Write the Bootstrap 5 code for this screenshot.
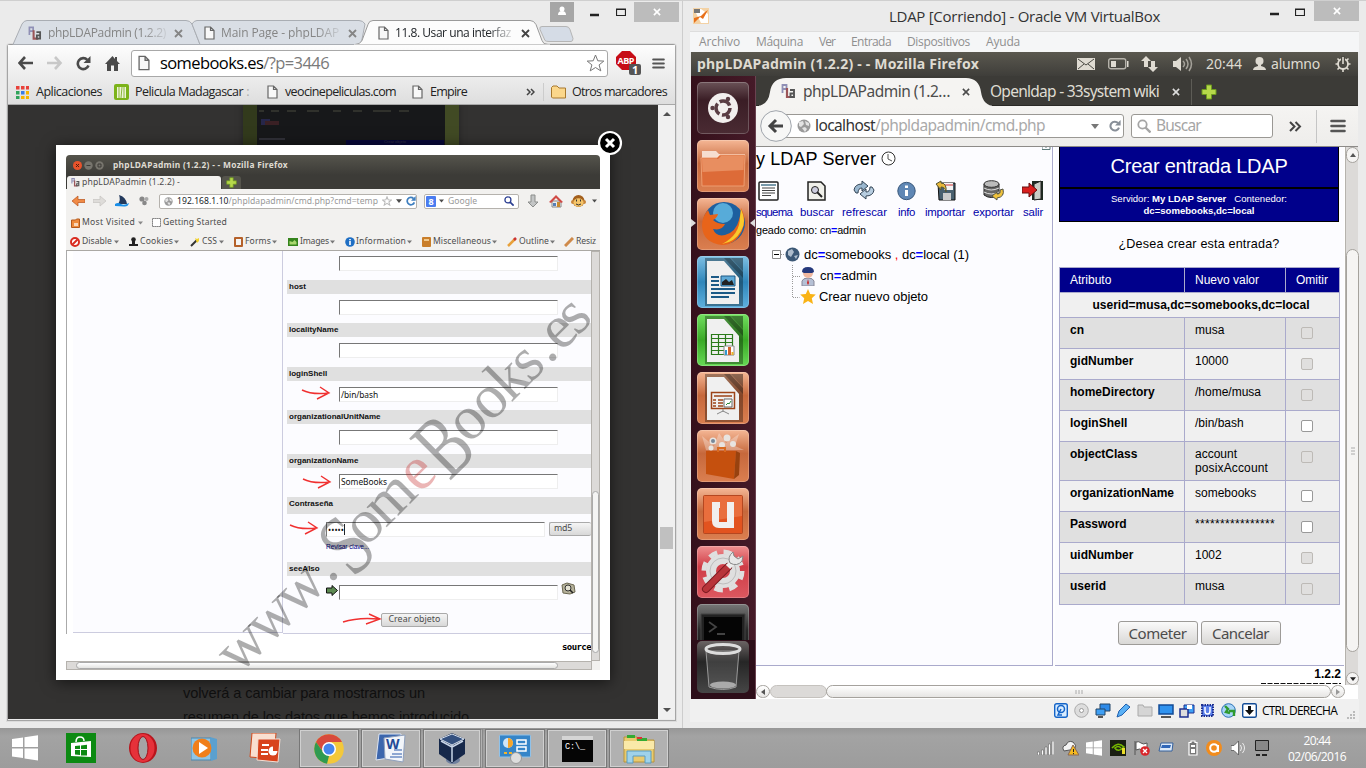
<!DOCTYPE html>
<html lang="es">
<head>
<meta charset="utf-8">
<title>Escritorio</title>
<link rel="stylesheet" href="https://cdn.jsdelivr.net/npm/bootstrap@5.3.0/dist/css/bootstrap.min.css">
<style>
body{width:1366px;height:768px;overflow:hidden;background:#ebebeb;font-family:"Open Sans","Noto Sans",sans-serif;font-size:12px;line-height:1;color:#222}
svg{display:block;flex:none}
span,b{white-space:nowrap}
.gr{display:grid;align-items:center;justify-items:start}
.desk{height:728px}
.win{width:683px;height:728px;border-top:1px solid #cfcfcf;background:#ebebeb}
.ar{font-family:"Liberation Sans",Arial,sans-serif}
.ub{font-family:"Noto Sans","Open Sans",sans-serif}
/* browser window, left */
.w1{border-right:1px solid #cdcdcd}
.strip{height:43px}
.strip>svg{left:0;top:0}
.tabs{height:26px;margin-top:19px;padding-left:28px;grid-template-columns:20px 126px 30px 17px 127px 30px 17px 126px 9px;color:#858585}
.fade1{-webkit-mask:linear-gradient(90deg,#000 80%,#0003);mask:linear-gradient(90deg,#000 80%,#0003)}
.ctl{left:550px;top:0;height:21px;grid-template-columns:40px 26px 18px 45px}
.frame{width:669px;height:677px;margin-left:7px;border:1px solid #a5a5a5;border-top-color:#9a9a9a;border-radius:3px 3px 0 0;box-shadow:0 0 0 1px #dcdcdc}
.tools{height:60px;background:linear-gradient(#fdfdfd,#dedede);border-bottom:1px solid #a8a8a8}
.navr{height:36px;padding-left:10px;grid-template-columns:29px 29px 29px 26px 485px 36px 13px}
.omni{width:477px;height:27px;background:#fff;border:1px solid #a8a8a8;border-radius:3px;grid-template-columns:22px 426px 20px;padding-left:6px;font-size:16.5px}
.bmk{height:22px;padding-left:8px;grid-template-columns:20px 78px 21px 132px 18px 127px 18px 96px 17px 8px 21px 96px;font-size:12.5px}
.page{height:614px}
.dark{width:650px;background:#333231}
.shot{width:216px;height:60px;margin-left:235px;background:#17181a;border-left:14px solid #323a1c;border-right:14px solid #414a24;box-shadow:0 0 6px #222}
.shot .blue{width:98px;height:9px;background:#08083a;margin:31px 0 0 89px;color:#334;font-size:4px}
.para{margin:520px 0 0 175px;font-size:14.6px;line-height:24px;color:#101010}
.box{left:48px;top:40px;width:554px;height:535px;padding:10px;background:#fff;box-shadow:0 2px 14px #0009}
.cls{left:541px;top:-15px}
.sb{width:17px;background:#f0f0f0}
.sb i{display:block;width:13px;height:22px;background:#c0c0c0;margin-top:400px}
/* picture inside the lightbox */
.pic{width:534px;height:515px;background:#f2f1ef;border-radius:4px 4px 0 0;color:#4c4c4c;font-size:8.6px;overflow:hidden}
.pt{height:20px;background:linear-gradient(#55544c,#3c3b37);grid-template-columns:11px 11px 18px 180px;padding-left:7px;color:#dfdbd2;font-size:8.4px}
.ptab{height:14px;background:#3c3b37}
.ptab .on{width:154px;height:13px;margin-left:1px;background:#f2f1ef;border-radius:3px 3px 0 0;grid-template-columns:11px 110px;padding-left:4px}
.ptab .pl{width:19px;height:13px;margin-left:1px;background:#55544c;border-radius:3px 3px 0 0}
.pnav{height:24px;grid-template-columns:22px 22px 24px 20px 265px 103px 22px 22px 16px;padding-left:5px}
.pf{height:15px;border:1px solid #b5b2ad;border-radius:2px;background:#fff;padding-left:4px}
.pbm{height:19px;padding-left:5px;grid-template-columns:11px 56px 14px 11px 80px}
.pdev{height:19px;padding:1px 0 0 4px;border-bottom:1px solid #aaa8a4;grid-template-columns:12px 32px 15px 11px 34px 16px 12px 17px 15px 11px 27px 16px 12px 30px 15px 11px 51px 15px 11px 59px 15px 12px 31px 14px 12px 30px}
.pc{height:410px;background:#fff}
.pl1{width:217px;margin-left:0;border-left:1px solid #aaa;height:383px}
.pl1 i{display:block;height:382px;margin-left:6px;background:#fcfcff;border-right:1px solid #ccccdf;border-bottom:1px solid #ccccdf}
.pr{width:308px;background:#fcfcff;height:383px;border-bottom:1px solid #ccccdf;padding-left:4px}
.hd{height:14px;background:#e0e0e0;padding-left:2px;font:bold 8px/14px "Liberation Sans",Arial,sans-serif;color:#111}
.inp{height:15px;width:219px;border:1px solid #eee;border-top:1px solid #777;border-left:1px solid #777;background:#fff;font-size:8.4px;line-height:13px;color:#111;padding-left:1px}
.fr{height:29.5px;padding:6px 0 0 52px}
.pbtn{border:1px solid #aaa;border-radius:2px;background:linear-gradient(#f5f5f5,#d8d8d8);height:14px;font-size:8.8px;line-height:11px}
.psb{width:9px;border:1px solid #b5b2ad;background:#dcdad8}
.psb i{display:block;margin:239px 0 0 0;height:162px;width:7px;border:1px solid #aaa;border-radius:4px;background:#f4f4f3}
.phs{height:9px;border:1px solid #b5b2ad;background:#dcdad8;width:526px}
.phs i{display:block;margin-left:9px;width:482px;height:7px;border:1px solid #aaa;border-radius:4px;background:linear-gradient(#fff,#e4e4e2)}
.ov{left:0;top:0}
/* virtual machine window, right */
.tb{height:30px;font-size:15px;padding-left:10px;grid-template-columns:196px 381px 25px 19px 45px;color:#333}
.xb{width:45px;height:20px;background:#bcbcbc}
.menu{height:21px;margin:0 7px;background:#f5f6f7;border-top:1px solid #ddd;grid-template-columns:57px 63px 32px 56px 79px 60px;padding-left:9px;color:#8f8f8f;font-size:12px}
.vm{width:667px;height:647px;margin-left:8px;background:#3c3b37}
.pan{height:24px;background:linear-gradient(#5a584f,#3f3e3a);color:#dfdbd2;padding-left:6px;grid-template-columns:380px 31px 33px 32px 33px 47px 18px 64px 16px;font-size:14px}
.lau{width:65px;height:623px;background:linear-gradient(90deg,#35101b,#451a28);border-right:1px solid #6a4250;padding:6px 0 0 6px}
.tile{width:52px;height:52px;border-radius:5px;margin-bottom:6px;box-shadow:inset 0 0 0 1px #ffffff38}
.t-or{background:linear-gradient(#f5b795,#c6683c 45%,#db7f50)}
.t-bl{background:linear-gradient(#7fc0e4,#2f86ba 50%,#5fb0de)}
.t-gr{background:linear-gradient(#73e060,#3aa926 50%,#67da55)}
.t-rd{background:linear-gradient(#f09090,#cf3c46 40%,#dc5860)}
.t-dk{background:linear-gradient(#6a5257,#3a1d25 35%,#4a2b33)}
.t-gy{background:linear-gradient(#777,#2a2a2a 50%,#1a1a1a)}
.t-tr{background:linear-gradient(#5d5555,#2a2a2a 45%,#444)}
.ff{width:602px}
.ftab{height:30px;background:#3c3b37;font-size:15.5px}
.ftab .gr{height:31px;padding-left:25px;grid-template-columns:22px 158px 29px 181px 30px 16px;color:#4c4c4c}
.fnav{height:41px;background:linear-gradient(#f5f4f2,#eeedeb);border-bottom:1px solid #8d8b88;grid-template-columns:371px 155px 32px 14px 20px;padding-left:4px;font-size:15.5px}
.ub1{width:350px;height:24px;border:1px solid #9a9894;border-radius:0 3px 3px 0;background:#fff;margin-left:14px;grid-template-columns:18px 276px 18px 16px;padding-left:22px;color:#aaa}
.bk{left:0;top:-4px}
.sbx{width:142px;height:24px;border:1px solid #9a9894;border-radius:3px;background:#fff;grid-template-columns:19px 60px;padding-left:5px;color:#a5a5a5}
.cont{height:538px;background:#fff}
.pla{width:297px;height:519px;background:#fcfcff;border-right:1px solid #aaaacc;border-bottom:1px solid #aaaacc;color:#000}
.srv{height:23px;grid-template-columns:125px 20px;font-size:18px}
.ics{height:36px;margin-top:8px;padding-left:2px;grid-template-columns:49px 46px 44px 38px 47px 40px 22px;align-items:start}
.lbs{height:16px;grid-template-columns:44px 42px 56px 27px 48px 50px 30px;color:#0000aa;font-size:11.4px}
.tr1{height:21px;padding-left:16px;grid-template-columns:13px 19px 200px;font-size:13px}
.tr2{height:21px;padding-left:36px;grid-template-columns:8px 20px 200px;font-size:13px}
.eq{color:#00f;font-weight:bold}
.rt{width:289px;height:519px;margin-left:2px;background:#fcfcff;border-bottom:1px solid #aaaacc;padding:0 5px 0 4px;color:#000}
.h1b{height:41px;line-height:38px;background:#00008b;color:#fff;border:1px solid #000;border-top:0;font-size:20px;text-align:center}
.h2b{height:34px;background:#00008b;color:#fff;border:1px solid #000;border-top:1px solid #000;font-size:9.6px;line-height:12px;padding-top:4px;text-align:center}
.tbl{width:280px;border-collapse:collapse;table-layout:fixed;font-size:12px;line-height:14px}
.tbl td,.tbl th{border:1px solid #aaaacc;padding:5px 10px 0;height:31px;vertical-align:top;overflow:visible}
.tbl th{background:#00008b;color:#fff;font-weight:normal;height:25px}
.tbl .o td{background:#e0e0e0}.tbl .e td{background:#f0f0f0}
.tbl .id td{height:25px;text-align:center;padding-left:11px;padding-right:8px}
.tbl .tall td{height:39px}
.ck{display:block;width:12px;height:12px;margin:4px 0 0 5px;border:1px solid #bdbab6;border-radius:2px;background:#e0dfde}
.ck.w{background:#fff;border-color:#999}
.fb{height:24px;border:1px solid #9d9b98;border-radius:3px;background:linear-gradient(#fafafa,#d9d8d6);color:#4c4c4c;font-size:15px;width:80px}
.vs{width:13px;background:#dcdad8;border-left:1px solid #b5b2ad;height:538px}
.vs i{display:block;width:13px;background:#f5f4f3;border:1px solid #a5a29d;border-radius:7px}
.hs{height:14px;background:#fff}
.hs i{display:block;height:13px;border:1px solid #a5a29d;border-radius:7px;background:linear-gradient(#fff,#e6e5e3)}
.stt{height:23px;margin:0 7px;background:#f0f0f0;padding-left:364px;grid-template-columns:20px 21px 21px 21px 21px 21px 21px 21px 21px 20px 85px 10px;font-size:12px;color:#000}
/* taskbar */
.tk{height:40px;background:linear-gradient(#979797,#a3a3a3 20%,#9c9c9c);grid-template-columns:54px 63px 62px 58px 50px 62px 62px 62px 62px 62px 428px 25px 24px 24px 24px 24px 30px 18px 25px 24px 33px 60px;padding-left:12px}
.ap{width:60px;height:39px;margin-top:1px;border:1px solid #777;box-shadow:inset 0 0 0 1px #d0d0d0;background:#b1b1b1}
.clk{color:#fff;font-size:12px;line-height:16px;text-align:center;padding-top:2px}
</style>
</head>
<body>
<svg width="0" height="0" class="position-absolute"><defs>
<symbol id="doc" viewBox="0 0 11 14"><path d="M1 1h5.500l3.500 3.500V13H1zM6.500 1v3.500H10" fill="#f8f8f8" stroke="#666" stroke-width="1.200"/></symbol>
<symbol id="x" viewBox="0 0 9 9"><path d="M1 1l7 7M8 1l-7 7" stroke="currentColor" stroke-width="1.800" fill="none"/></symbol>
<symbol id="dn" viewBox="0 0 8 5"><path d="M0 0h8l-4 5z" fill="currentColor"/></symbol>
<symbol id="pla" viewBox="0 0 15 15"><path d="M1.500 9V1h4v4h-4" fill="none" stroke="#8f8fb5" stroke-width="1.800"/><path d="M6 4v9h5" fill="none" stroke="#9c5558" stroke-width="2.200"/><path d="M9 6h4v7h-3.500V9.500H13" fill="none" stroke="#555" stroke-width="1.900"/></symbol>
<symbol id="plus" viewBox="0 0 16 16"><path d="M5.500 1h5v4.500H15v5h-4.500V15h-5v-4.500H1v-5h4.500z" fill="#b6d84a" stroke="#6d9a1e"/></symbol>
<symbol id="globe" viewBox="0 0 14 14"><circle cx="7" cy="7" r="6.500" fill="#9a9a9a"/><path d="M2 3l4-1 1 3-3 3-2-1zM8 2l4 2v3l-3-1zM5 9l3-1 2 2-2 3z" fill="#e3e3e3"/></symbol>
<symbol id="rel" viewBox="0 0 15 15"><path d="M12.500 9.500A5.500 5.500 0 1 1 11.300 3.800" fill="none" stroke="currentColor" stroke-width="2.600"/><path d="M14.500 0v7h-7z" fill="currentColor"/></symbol>
<symbol id="ham" viewBox="0 0 16 13"><path d="M1.500 1.500h13M1.500 6.500h13M1.500 11.500h13" stroke="#555" stroke-width="2.600" stroke-linecap="round"/></symbol>
<symbol id="win" viewBox="0 0 26 26"><path d="M0 4l11-1.500V12H0zM12.500 2.300L26 .3V12H12.500zM0 13.500h11V23L0 21.500zM12.500 13.500H26v12l-13.500-2z" fill="#fff"/></symbol>
<symbol id="mag" viewBox="0 0 14 14"><circle cx="5.500" cy="5.500" r="4.200" fill="none" stroke="currentColor" stroke-width="1.800"/><path d="M8.500 8.500l5 5" stroke="currentColor" stroke-width="2.400"/></symbol>
<symbol id="lo" viewBox="0 0 52 52"><path d="M8 2h25l13 14v34H8z" fill="#0005"/><path d="M10 5h17l15 17v26H10z" fill="#f0f0f0"/><path d="M27 2h19v20z" fill="#0004"/><path d="M34 2h12v13z" fill="#0003"/></symbol>
</defs></svg>

<div class="desk d-flex">
<!-- Chrome -->
<div class="win w1 position-relative">
 <div class="strip position-relative">
  <svg class="position-absolute" width="682" height="44">
   <path d="M13 43.500L22 23q2-3.500 5-3.500H186q4 0 6 3.500l8 20.500z" fill="#d9dee5" stroke="#a9adb3"/>
   <path d="M200 43.500L192 23q2-3.500 5-3.500H359q4 0 6 3.500l-4 20.500z" fill="#d9dee5" stroke="#a9adb3"/>
   <path d="M545 39.500l-5-11q-1-3 2-3h24q3 0 4 3l3 9q0 3-2 3h-22q-3 0-4-1z" fill="#d5dce6" stroke="#b5b5b5"/>
   <path d="M355 43.500q5 0 7-4l6-16q1-4 5-4H530q4 0 6 4l6 16q1 4 6 4z" fill="#fcfcfc" stroke="#9a9a9a"/>
   <path d="M354 44H550" stroke="#fcfcfc"/>
  </svg>
  <div class="tabs gr position-absolute top-0">
   <svg width="14" height="15"><use href="#pla"/></svg><span class="fade1" data-w="118">phpLDAPadmin (1.2.2)</span><svg width="9" height="9"><use href="#x"/></svg>
   <svg width="11" height="14"><use href="#doc"/></svg><span class="fade1" data-w="118">Main Page - phpLDAP</span><svg width="9" height="9"><use href="#x"/></svg>
   <svg width="11" height="14"><use href="#doc"/></svg><span data-w="116" class="text-dark fade1">11.8. Usar una interfaz</span><svg width="9" height="9" color="#444"><use href="#x"/></svg>
  </div>
  <div class="ctl gr position-absolute">
   <svg width="24" height="20"><path d="M0 0h24v20H0z" fill="#a6a6a6"/><circle cx="12" cy="7" r="2.500" fill="#fff"/><path d="M8 13q0-4 4-4t4 4z" fill="#fff"/></svg>
   <svg width="9" height="10"><path d="M0 8h9" stroke="#222" stroke-width="2.500"/></svg>
   <svg width="10" height="8"><path d="M.5 1h9v6.500h-9zM0 1.500h10" fill="none" stroke="#222" stroke-width="1.200"/></svg>
   <div class="xb d-flex align-items-center justify-content-center"><svg width="8" height="8" color="#fff"><use href="#x"/></svg></div>
  </div>
 </div>
 <div class="frame">
  <div class="tools">
   <div class="navr gr">
    <svg width="16" height="14"><path d="M1 7h14M7 1L1.500 7 7 13" fill="none" stroke="#4a4a4a" stroke-width="2.600"/></svg>
    <svg width="16" height="14"><path d="M0 7h14M8 1l5.500 6L8 13" fill="none" stroke="#c8c8c8" stroke-width="2.600"/></svg>
    <svg width="15" height="15" color="#4a4a4a"><use href="#rel"/></svg>
    <svg width="15" height="15"><path d="M7.500 0L0 8h2v7h4V9.500h3V15h4V8h2l-3-3V1h-2v2z" fill="#4a4a4a"/></svg>
    <div class="omni gr"><svg width="12" height="16"><use href="#doc"/></svg><span data-w="169"><span class="text-black">somebooks.es</span><span style="color:#7a7a7a">/?p=3446</span></span>
     <svg width="19" height="18" viewBox="0 0 19 18"><path d="M9.500 1l2.300 5.800 6 .3-4.700 3.800 1.700 6-5.300-3.400-5.300 3.400 1.700-6L1.200 7.100l6-.3z" fill="#fff" stroke="#777"/></svg></div>
    <svg width="26" height="25"><path d="M6 0h8l6 6v7l-6 6H6l-6-6V6z" fill="#c70d16"/><text x="10" y="13" font-size="9" font-weight="bold" fill="#fff" text-anchor="middle" textLength="17">ABP</text><rect x="13" y="13" width="12" height="11" rx="2" fill="#555"/><text x="16" y="23" font-size="11" font-weight="bold" fill="#fff">1</text></svg>
    <svg width="13" height="13"><use href="#ham"/></svg>
   </div>
   <div class="bmk gr">
    <svg width="13" height="13"><path d="M0 0h3.500v3.500H0zM5 0h3.500v3.500H5zM10 0h3v3.500h-3z" fill="#e8413a"/><path d="M0 5h3.500v3.500H0z" fill="#2fa35a"/><path d="M5 5h3.500v3.500H5z" fill="#3a7de8"/><path d="M10 5h3v3.500h-3zM5 10h3.500v3H5zM10 10h3v3h-3z" fill="#f7b400"/><path d="M0 10h3.500v3H0z" fill="#2fa35a"/></svg><span data-w="66">Aplicaciones</span>
    <svg width="15" height="16"><rect width="15" height="16" rx="2" fill="#7cb31a"/><path d="M3 3h9v11H3z" fill="#eef5d8"/><path d="M5 3v11M8 3l-1 11M10 3v11" stroke="#8ab53a"/></svg><span><span data-w="108">Pelicula Madagascar</span> <span style="color:#aaa">:</span></span>
    <svg width="11" height="14"><use href="#doc"/></svg><span data-w="111">veocinepeliculas.com</span>
    <svg width="11" height="14"><use href="#doc"/></svg><span data-w="37">Empire</span>
    <svg width="9" height="8"><path d="M1 1l3 3-3 3M5 1l3 3-3 3" fill="none" stroke="#444" stroke-width="1.500"/></svg>
    <svg width="1" height="18"><path d="M.5 0v18" stroke="#ccc"/></svg>
    <svg width="16" height="14"><path d="M.5 12V2.500L2 1h4l2 2h6.500v10H1.500z" fill="#fbd78b" stroke="#a8792e"/></svg><span data-w="95">Otros marcadores</span>
   </div>
  </div>
  <div class="page d-flex position-relative">
   <div class="dark position-relative overflow-hidden ar">
    <div class="position-absolute"><div class="shot"><svg class="position-absolute" width="190" height="40"><path d="M2 6h5M14 6h8M30 6h9M50 6h12M76 6h8M96 6h9M116 6h18M142 6h10" stroke="#3a3a33" stroke-width="1.500"/><path d="M4 14h9v6H4z" fill="#26264a"/><path d="M8 16h14v4H8z" fill="#3a2024"/><path d="M2 34h26" stroke="#303038" stroke-width="2"/></svg><div class="pt-1"><div class="blue text-center">Crear objeto</div></div></div></div>
    <div class="para position-relative pt-5"><div class="pt-2"><span data-w="242">volverá a cambiar para mostrarnos un</span></div><span data-w="286">resumen de los datos que hemos introducido</span></div>
   </div>
   <div class="sb d-flex flex-column align-items-center"><svg width="8" height="22"><path d="M0 11h8l-4-4z" fill="#505050"/></svg><i></i><svg class="mt-auto" width="8" height="18"><path d="M0 7h8l-4 4z" fill="#505050"/></svg></div>
   <!-- lightbox -->
   <div class="box position-absolute">
    <div class="pic position-relative ub">
     <div class="pt gr"><svg width="9" height="9"><circle cx="4.500" cy="4.500" r="4.500" fill="#e8532b"/><path d="M3 3l3 3M6 3L3 6" stroke="#52200f"/></svg><svg width="9" height="9"><circle cx="4.500" cy="4.500" r="4.200" fill="#77756d"/><path d="M2.500 4.500h4" stroke="#3c3b37"/></svg><svg width="9" height="9"><circle cx="4.500" cy="4.500" r="4.200" fill="#77756d"/><path d="M3 3h3v3H3z" fill="none" stroke="#3c3b37"/></svg><b data-w="175">phpLDAPadmin (1.2.2) - - Mozilla Firefox</b></div>
     <div class="ptab d-flex align-items-end"><div class="on gr"><svg width="9" height="9"><use href="#pla"/></svg><span data-w="98">phpLDAPadmin (1.2.2) -</span></div><div class="pl d-flex justify-content-center align-items-center"><svg width="11" height="11"><use href="#plus"/></svg></div></div>
     <div class="pnav gr">
      <svg width="14" height="12"><path d="M14 4.500H7V1L1 6l6 5V7.500h7z" fill="#f08a45" stroke="#b7531c" stroke-width=".7"/></svg>
      <svg width="14" height="12"><path d="M0 4.500h7V1l6 5-6 5V7.500H0z" fill="#dedcd9" stroke="#c5c3c0" stroke-width=".7"/></svg>
      <svg width="15" height="14"><path d="M4 1q7 2 8 9H3q3-4 1-9z" fill="#23395c"/><path d="M0 10q3-2 6 0t8-1q-1 4-5 3.500T0 12z" fill="#1a8fe8"/></svg>
      <svg width="10" height="10"><circle cx="3" cy="3" r="2.600" fill="#888"/><circle cx="7.500" cy="3" r="2" fill="#aaa"/><circle cx="5.500" cy="7" r="2.300" fill="#888"/></svg>
      <div class="pf d-flex align-items-center" style="width:258px"><svg width="9" height="9"><use href="#globe"/></svg><span class="ms-1" data-w="201"><span class="text-dark">192.168.1.10</span><span style="color:#999">/phpldapadmin/cmd.php?cmd=temp</span></span><svg class="ms-1" width="10" height="10" viewBox="0 0 19 18"><path d="M9.500 1l2.300 5.800 6 .3-4.700 3.800 1.700 6-5.300-3.400-5.300 3.400 1.700-6L1.200 7.100l6-.3z" fill="#fff" stroke="#bbb" stroke-width="2"/></svg><svg class="ms-1" width="6" height="4"><use href="#dn"/></svg><svg class="ms-1" width="10" height="10" color="#3f7fbf"><use href="#rel"/></svg></div>
      <div class="pf d-flex align-items-center" style="width:95px;padding-left:1px"><svg width="10" height="11"><rect width="10" height="11" rx="1" fill="#4a7cf0"/><text x="5" y="8.500" font-size="9" font-weight="bold" text-anchor="middle" fill="#fff">8</text></svg><svg style="margin-left:3px" width="5" height="4"><use href="#dn"/></svg><span class="ms-1" data-w="29" style="color:#999">Google</span><svg class="ms-auto me-1" width="10" height="10" color="#2c3f92"><use href="#mag"/></svg></div>
      <svg width="12" height="14"><path d="M4 1h4v7h3l-5 5-5-5h3z" fill="#c3c5c5" stroke="#8b8d8b"/></svg>
      <svg width="14" height="14"><path d="M3 7h9v6H3z" fill="#eee" stroke="#888"/><path d="M0 8l7-7 7 7-2 1-5-5-5 5z" fill="#d04a44"/><path d="M8 8h3v5H8z" fill="#c98a2f"/><path d="M4 9h3v3H4z" fill="#567fb8"/></svg>
      <svg width="15" height="14"><circle cx="7.500" cy="7" r="6" fill="#a35f1c"/><circle cx="2" cy="8" r="2" fill="#c98538"/><circle cx="13" cy="8" r="2" fill="#c98538"/><ellipse cx="7.500" cy="8.500" rx="5" ry="4.300" fill="#f5c56a"/><path d="M5.500 5.500v2M9.500 5.500v2M5 10q2.500 2 5 0" stroke="#333" fill="none"/></svg>
     </div>
     <svg class="position-absolute" style="left:526px;top:44px" width="5" height="4"><use href="#dn"/></svg>
     <div class="pbm gr"><svg width="10" height="10"><path d="M.5 2h4l1-1h3v8.500h-8z" fill="#ee8b3c" stroke="#b4591b"/><path d="M3 5h4v3H3z" fill="#f9d7b8"/></svg><span data-w="53">Most Visited</span><svg width="5" height="4" color="#888"><use href="#dn"/></svg><svg width="9" height="9"><path d="M.5.5h8v8h-8z" fill="#fff" stroke="#555" stroke-dasharray="1.200 .8"/></svg><span data-w="64">Getting Started</span></div>
     <div class="pdev gr">
      <svg width="10" height="10"><circle cx="5" cy="5" r="4" fill="#fff" stroke="#d92c20" stroke-width="2"/><path d="M2.500 7.500l5-5" stroke="#d92c20" stroke-width="2"/></svg><span data-w="30">Disable</span><svg width="5" height="4" color="#777"><use href="#dn"/></svg>
      <svg width="9" height="10"><circle cx="4.500" cy="2.500" r="2.300" fill="#222"/><path d="M3 4h3v3h3v2H0V7h3z" fill="#222"/></svg><span data-w="33">Cookies</span><svg width="5" height="4" color="#777"><use href="#dn"/></svg>
      <svg width="10" height="10"><path d="M1 9l6-6" stroke="#333" stroke-width="2"/><path d="M5 1l2 1 2-1v3l-2 2" fill="#f2d22e"/></svg><span data-w="15">CSS</span><svg width="5" height="4" color="#777"><use href="#dn"/></svg>
      <svg width="9" height="10"><rect width="9" height="10" rx="1" fill="#b5612a"/><path d="M2 2h5v6H2z" fill="#f5f5f5"/></svg><span data-w="26">Forms</span><svg width="5" height="4" color="#777"><use href="#dn"/></svg>
      <svg width="10" height="8"><path d="M0 0h10v8H0z" fill="#35841c"/><path d="M1.500 6.500V3l3 1 2-2 2 2v2.500z" fill="#a9d76e"/></svg><span data-w="29">Images</span><svg width="5" height="4" color="#777"><use href="#dn"/></svg>
      <svg width="10" height="10"><circle cx="5" cy="5" r="4.800" fill="#1f6fc4"/><path d="M5 4v4M5 2v1.200" stroke="#fff" stroke-width="1.600"/></svg><span data-w="50">Information</span><svg width="5" height="4" color="#777"><use href="#dn"/></svg>
      <svg width="9" height="10"><rect width="9" height="10" rx="1" fill="#c97e2a"/><path d="M2 2h5v2H2z" fill="#f2c98b"/></svg><span data-w="58">Miscellaneous</span><svg width="5" height="4" color="#777"><use href="#dn"/></svg>
      <svg width="10" height="10"><path d="M1 9l7-7" stroke="#e8a13a" stroke-width="2.500"/><path d="M7 3l2-2" stroke="#c33" stroke-width="2.500"/></svg><span data-w="30">Outline</span><svg width="5" height="4" color="#777"><use href="#dn"/></svg>
      <svg width="10" height="10"><path d="M1 9l8-8" stroke="#cf8a4a" stroke-width="3"/></svg><span data-w="20">Resiz</span>
     </div>
     <div class="pc d-flex overflow-hidden">
      <div class="pl1"><i></i></div>
      <div class="pr">
       <div class="fr" style="height:28.5px;padding-top:5px"><div class="inp"></div></div>
       <div class="hd">host</div><div class="fr"><div class="inp"></div></div>
       <div class="hd">localityName</div><div class="fr"><div class="inp"></div></div>
       <div class="hd">loginShell</div><div class="fr"><div class="inp"><span data-w="37">/bin/bash</span></div></div>
       <div class="hd">organizationalUnitName</div><div class="fr"><div class="inp"></div></div>
       <div class="hd">organizationName</div><div class="fr"><div class="inp"><span data-w="46">SomeBooks</span></div></div>
       <div class="hd" style="height:17px">Contraseña</div>
       <div class="fr d-flex" style="height:47.5px;padding:8px 0 0 39px"><div class="position-relative"><div class="inp"><span data-w="16">•••••</span><span class="border-start border-dark"></span></div><span class="ar" style="font-size:6.6px;color:#00008b;line-height:20px" data-w="43">Revisar clave...</span></div><div class="pbtn" style="width:60px;margin-left:4px;padding-left:4px;border-right:0"><span data-w="18">md5</span></div></div>
       <div class="hd">seeAlso</div>
       <div class="fr d-flex" style="height:37px;padding:9px 0 0 39px"><svg width="13" height="11"><path d="M.5 3H6V.5l5.500 5L6 10.500V8H.5z" fill="#5d8a52" stroke="#111"/></svg><div class="inp"></div><svg style="margin-left:3px;margin-top:-3px" width="15" height="13"><path d="M1 3l5-2 7 2 1 7-5 2-7-1z" fill="#b5b19a" stroke="#6c6852"/><circle cx="7" cy="6" r="3" fill="#e5e3d3" stroke="#333"/><path d="M9 8l3 3" stroke="#222" stroke-width="1.500"/></svg></div>
       <div class="pbtn text-center" style="width:67px;margin-left:94px"><span data-w="52">Crear objeto</span></div>
       <div class="text-end fw-bold" style="padding:13px 0 0;font:bold 9px/14px 'DejaVu Sans Mono',monospace;color:#000"><span data-w="29">source</span></div>
      </div>
      <div class="psb"><i></i></div>
     </div>
     <div class="phs"><i></i></div>
     <svg class="position-absolute ov" width="534" height="515">
      <g transform="translate(177 516) rotate(-45)" font-family="Liberation Serif" font-size="62" fill="#000" fill-opacity=".32"><text x="-6 35 76 123">www.</text><text x="143" y="13" font-size="88" textLength="38" lengthAdjust="spacingAndGlyphs">S</text><text x="174 202">om</text><text x="250" fill="#c01818">e</text><text x="280" y="12" font-size="90" textLength="42" lengthAdjust="spacingAndGlyphs">B</text><text x="320 350 379 407 433 450 473">ooks.es</text></g>
      <g fill="none" stroke="#f03030" stroke-width="1.400"><path id="arw" d="M236 235q10 5 27 3M254 232l9 6-12 6"/><use href="#arw" x="1" y="89"/><use href="#arw" x="-12" y="135"/><path d="M277 467q15-5 36-3M303 459l11 5-14 5"/></g>
     </svg>
    </div>
    <svg class="cls position-absolute" width="26" height="26"><circle cx="13" cy="13" r="11" fill="#000" stroke="#fff" stroke-width="2.200"/><path d="M9 9l8 8M17 9l-8 8" stroke="#fff" stroke-width="3"/></svg>
   </div>
  </div>
 </div>
</div>

<!-- VirtualBox -->
<div class="win">
 <div class="tb gr">
  <svg width="16" height="16"><path d="M0 0h16v16H0z" fill="#f3d2a5"/><path d="M1 1h7l7 5v9H8z" fill="#fff"/><path d="M1 15l6-6 3 2 5-9-3 2-4 4-7 2z" fill="#e8701a"/><path d="M1 1h6v4H1z" fill="#777"/></svg>
  <span data-w="271">LDAP [Corriendo] - Oracle VM VirtualBox</span>
  <svg width="9" height="12"><path d="M0 4h9" stroke="#222" stroke-width="2.500"/></svg>
  <svg width="10" height="16"><path d="M.5 1h9v6.500h-9zM0 1.500h10" fill="none" stroke="#222" stroke-width="1.200"/></svg>
  <div class="xb d-flex align-items-center justify-content-center align-self-start"><svg width="8" height="8" color="#fff"><use href="#x"/></svg></div>
 </div>
 <div class="menu gr"><span data-w="41">Archivo</span><span data-w="47">Máquina</span><span data-w="16">Ver</span><span data-w="40">Entrada</span><span data-w="63">Dispositivos</span><span data-w="34">Ayuda</span></div>
 <div class="vm ub">
  <div class="pan gr"><b data-w="282">phpLDAPadmin (1.2.2) - - Mozilla Firefox</b>
   <svg width="18" height="12"><path d="M0 0h18v12H0z" fill="#dfdbd2"/><path d="M1 1l8 6 8-6M1 11l6-5M17 11l-6-5" fill="none" stroke="#4a4942"/></svg>
   <svg width="21" height="12"><rect x=".7" y=".7" width="17" height="10" rx="2" fill="none" stroke="#b5b2aa" stroke-width="1.400"/><path d="M3 3h5v6H3zM19 3h1.500v6H19z" fill="#dfdbd2"/></svg>
   <svg width="17" height="16"><path d="M3 11V5H0l5-5 5 5H7v6zM10 5v6H7l5 5 5-5h-3V5z" fill="#dfdbd2"/></svg>
   <svg width="20" height="16"><path d="M0 5h3l5-4v14l-5-4H0z" fill="#dfdbd2"/><path d="M10 5q3 3 0 6M13 3q4 5 0 10M16 1q5 7 0 14" fill="none" stroke="#a5a29a" stroke-width="1.500"/></svg>
   <span data-w="36">20:44</span>
   <svg width="13" height="14"><circle cx="6.500" cy="4" r="4" fill="#dfdbd2"/><path d="M0 13q0-3 5-4V6h3v3q5 1 5 4z" fill="#dfdbd2"/></svg>
   <span data-w="49">alumno</span>
   <svg width="16" height="16"><circle cx="8" cy="8" r="5" fill="none" stroke="#dfdbd2" stroke-width="1.800"/><path d="M8 0v7" stroke="#4a4942" stroke-width="4"/><path d="M8 1v7M.5 8h3M12.500 8h3M2.500 2.500l2 2M13.500 2.500l-2 2M2.500 13.500l2-2M13.500 13.500l-2-2M8 13v3" stroke="#dfdbd2" stroke-width="1.600"/></svg>
  </div>
  <div class="d-flex">
   <div class="lau overflow-hidden position-relative">
    <div class="tile t-dk"><svg width="52" height="52"><circle cx="26" cy="26" r="15" fill="#f2efee"/><circle cx="26" cy="26" r="7" fill="none" stroke="#5a3d44" stroke-width="3.500" stroke-dasharray="12 2.660"/><g fill="#5a3d44"><circle cx="15.500" cy="26" r="2.200"/><circle cx="31" cy="17" r="2.200"/><circle cx="31" cy="35" r="2.200"/></g></svg></div>
    <div class="tile t-or"><svg width="52" height="52"><path d="M5 11h14l3 3h26v10H5z" fill="#f6ded0"/><path d="M4 18h16l3-3h25l-1 31H5z" fill="#dd6b38" stroke="#ee9d70"/><path d="M5 19h16l3-3h23l-.5 14-41 2z" fill="#f0a57b" opacity=".6"/></svg></div>
    <div class="tile t-or"><svg width="52" height="52"><circle cx="27" cy="25" r="21" fill="#1d5f9f"/><circle cx="26" cy="15" r="10" fill="#57abd9"/><path d="M44 10q6 10 1 23-7 14-20 14Q6 45 5 28q0-10 6-16l2 5 8-1q-1 4-5 6 4 4 12 4-3 7-12 5 3 8 12 6 11-3 14-15 2-6 2-12z" fill="#e8641a"/><path d="M44 11q6 13 0 22-6 11-19 13 18-9 18-27z" fill="#f9c92d"/></svg></div>
    <div class="tile t-bl"><svg width="52" height="52"><use href="#lo" width="52" height="52"/><path d="M14 21h8M14 25h8M14 29h8M14 33h24M14 37h24M14 41h18" stroke="#1c5a86" stroke-width="2"/><path d="M24 20h14v10H24z" fill="#5ea9d6" stroke="#1c5a86"/><path d="M25 29v-3l4-3 3 3 3-2 2 5z" fill="#222"/></svg></div>
    <div class="tile t-gr"><svg width="52" height="52"><use href="#lo" width="52" height="52"/><path d="M14.500 20.500h21v20h-21zM14 24.500h21M14 28.500h21M14 32.500h21M14 36.500h21M21.500 20v20M28.500 20v20" fill="none" stroke="#2a7a1a" stroke-width="1.200"/><path d="M27 32h10v9H27z" fill="#fff" stroke="#888"/><path d="M28 36h2v5h-2z" fill="#39c"/><path d="M31 33h3v8h-3z" fill="#d2622a"/><path d="M34.500 38h2v3h-2z" fill="#eab52a"/></svg></div>
    <div class="tile t-or"><svg width="52" height="52"><use href="#lo" width="52" height="52"/><path d="M14.500 20.500h23v16h-23zM17 24h18M21 28h5M21 31h5M21 34h5M16 28h3M16 31h3M16 34h3" fill="none" stroke="#9c4318" stroke-width="1.500"/><path d="M27 27h8v8h-8z" fill="#fff" stroke="#666"/><path d="M29 33l2-2 1 1 2-3" stroke="#2a8a3a" fill="none"/><path d="M26 37v3M20 42l6-3 6 3" stroke="#888" fill="none"/></svg></div>
    <div class="tile t-or"><svg width="52" height="52"><path d="M9 20L5 6l12 10L22 3l7 10L42 4l-4 12 9 4z" fill="#fff" opacity=".3"/><g fill="#e8e4e0"><circle cx="16" cy="11" r="3.500"/><circle cx="30" cy="8" r="3.500"/><circle cx="25" cy="15" r="3"/><circle cx="36" cy="14" r="3"/><circle cx="14" cy="18" r="2.500"/></g><circle cx="16" cy="11" r="2" fill="#789"/><path d="M9 21h30l-2 28-28-5z" fill="#c5500e"/><path d="M39 21l4 2-1 22-5 4z" fill="#98420f"/><path d="M21 22v-4h7v4" fill="none" stroke="#d96a20" stroke-width="2"/></svg></div>
    <div class="tile t-or"><svg width="52" height="52"><rect x="6.500" y="7.500" width="39" height="38" rx="1" fill="#e2531f" stroke="#b54720"/><path d="M7 8h38v20L7 34z" fill="#ef8a5c" opacity=".5"/><path d="M15 14h8v6h-1v14h8V14h7v26H22q-7 0-7-7z" fill="#f1efee"/></svg></div>
    <div class="tile t-rd"><svg width="52" height="52"><circle cx="26" cy="25" r="12" fill="none" stroke="#dfdfdf" stroke-width="10"/><circle cx="26" cy="25" r="19" fill="none" stroke="#dfdfdf" stroke-width="5" stroke-dasharray="8.500 6.420"/><circle cx="26" cy="25" r="13" fill="none" stroke="#bdbdbd"/><path d="M9 43l22-22" stroke="#7d1c22" stroke-width="8" stroke-linecap="round"/><path d="M9 43l22-22" stroke="#b8343a" stroke-width="6" stroke-linecap="round"/><path d="M31 21l5-5" stroke="#eee" stroke-width="6"/><path d="M36 6q-6 5-3 11 7 4 12-2l1-5-5 3-4-3z" fill="#e8e8e8" stroke="#888"/></svg></div>
    <div class="tile t-gy"><svg width="52" height="37"><path d="M4 10h44v40H4z" fill="#222" stroke="#444"/><path d="M7 13h38v30H7z" fill="#050505"/><path d="M12 18l7 5-7 5M20 30h8" stroke="#444" fill="none" stroke-width="1.800"/></svg></div>
    <svg class="position-absolute" style="left:0;top:564px" width="65" height="59"><defs><linearGradient id="tg" x2="0" y2="1"><stop stop-color="#6b6464"/><stop offset=".4" stop-color="#262626"/><stop offset="1" stop-color="#464646"/></linearGradient></defs><path d="M0 0h64v59H0z" fill="#2d0e19"/><rect x="6" y="1" width="52" height="52" rx="5" fill="url(#tg)"/><path d="M15 11l3 36q14 5 27 0l3-36z" fill="#8884" stroke="#999"/><ellipse cx="32" cy="45" rx="13" ry="3.500" fill="#aaa"/><ellipse cx="32" cy="9" rx="17" ry="4.500" fill="none" stroke="#ddd" stroke-width="3"/></svg>
    <svg class="position-absolute" style="left:0;top:141px" width="65" height="12"><path d="M0 2l5 4-5 4zM64 2l-5 4 5 4z" fill="#ddd"/></svg>
   </div>
   <div class="ff">
    <div class="ftab position-relative">
     <svg class="position-absolute ov" width="602" height="30"><path d="M0 30q12 0 14-14Q16 2 30 2H210q13 0 15 14 2 14 14 14z" fill="#f5f4f2"/><path d="M435.500 3v27" stroke="#5d5c56"/><path d="M0 29.500h3M236 29.500h366" stroke="#2a2926"/></svg>
     <div class="gr position-relative"><svg width="15" height="15"><use href="#pla"/></svg><span data-w="147">phpLDAPadmin (1.2…</span><svg style="margin-left:1px" width="8" height="8"><use href="#x"/></svg><span data-w="169" style="color:#dfdbd2">Openldap - 33system wiki</span><svg style="margin-left:1px" width="8" height="8" color="#ddd"><use href="#x"/></svg><svg width="16" height="16"><use href="#plus"/></svg></div>
    </div>
    <div class="fnav gr">
     <div class="position-relative">
      <div class="ub1 gr"><svg width="14" height="14"><use href="#globe"/></svg><span data-w="230"><span style="color:#333">localhost</span>/phpldapadmin/cmd.php</span><svg width="8" height="5" color="#777"><use href="#dn"/></svg><svg width="12" height="12" color="#888f98"><use href="#rel"/></svg></div>
      <svg class="bk position-absolute" width="33" height="32"><circle cx="16" cy="16" r="15.300" fill="#f7f7f6" stroke="#9fa4ab"/><path d="M10 16h13M16 10l-6 6 6 6" fill="none" stroke="#444" stroke-width="3"/></svg>
     </div>
     <div class="sbx gr"><svg width="14" height="14"><use href="#mag"/></svg><span data-w="45">Buscar</span></div>
     <svg style="margin-left:3px" width="13" height="11"><path d="M1 1l4.500 4.500L1 10M6.500 1L11 5.500 6.500 10" fill="none" stroke="#444" stroke-width="2"/></svg>
     <svg width="1" height="33" style="margin-left:-2px"><path d="M.5 0v33" stroke="#c5c5c5"/></svg>
     <svg width="16" height="14" style="margin-left:-2px"><use href="#ham"/></svg>
    </div>
    <div class="d-flex" style="background:#fff">
     <div class="ar" style="width:589px">
      <div class="cont">
       <div class="d-flex">
        <div class="pla position-relative">
         <svg class="position-absolute" style="left:286px;top:0" width="9" height="3"><path d="M0 0v2.500h8V0M4 0v1" fill="none" stroke="#5d7a7a"/></svg>
         <div class="srv gr"><span data-w="120">y LDAP Server</span><svg width="15" height="15"><circle cx="7.500" cy="7.500" r="6.500" fill="#fff" stroke="#333"/><path d="M7 3v5l4 2" fill="none" stroke="#555"/></svg></div>
         <div class="ics gr">
          <svg width="22" height="24"><rect x="1" y="4" width="19" height="18" rx="1" fill="#fff" stroke="#222" stroke-width="1.500"/><path d="M3 7h15" stroke="#79a" stroke-width="2"/><path d="M4 10h13M4 12.500h13M4 15h13M4 17.500h9" stroke="#444"/></svg>
          <svg width="20" height="24"><path d="M1 4h13l4 4v14H1z" fill="#f0f0ea" stroke="#222" stroke-width="1.500"/><circle cx="8" cy="12" r="3.500" fill="#ccd" stroke="#222"/><path d="M10 14l5 5" stroke="#222" stroke-width="2"/></svg>
          <svg width="22" height="24"><path d="M3 15l-2-3q1-6 8-6V3l6 5-6 5v-3q-4 0-4 5z" fill="#9ab7cf" stroke="#345"/><path d="M19 9l2 3q-1 6-8 6v3l-6-5 6-5v3q4 0 4-5z" fill="#b7cde0" stroke="#345"/></svg>
          <svg width="20" height="24"><circle cx="9.500" cy="13" r="8.700" fill="#5f87b5" stroke="#3a587b"/><path d="M9.500 12v6M9.500 7.500v2.500" stroke="#fff" stroke-width="3"/></svg>
          <svg width="22" height="24"><path d="M3 5h17v17H4z" fill="#49606f" stroke="#111"/><path d="M9 5h9v7H9z" fill="#f4f4f4"/><path d="M9 7h9" stroke="#c33"/><path d="M8 15h8v7H8z" fill="#ccc"/><path d="M1 6l5-3v2q6 0 5 9-1-5-5-5v3z" fill="#e7b73a" stroke="#553"/></svg>
          <svg width="23" height="24"><path d="M2 6v11q7 5 15 0V6z" fill="#666" stroke="#222"/><ellipse cx="9.500" cy="6" rx="7.500" ry="3.300" fill="#bbb" stroke="#333"/><path d="M2 10q7 4 15 0M2 14q7 4 15 0" fill="none" stroke="#ddd"/><path d="M21 11q2 8-6 9v2l-5-4 5-4v2q4 0 3-4z" fill="#efc23c" stroke="#554"/></svg>
          <svg width="22" height="24"><path d="M10 3h11v19H10z" fill="#1e2b22"/><path d="M12 6l7-3v18l-7 1z" fill="#c9cdc6" stroke="#222"/><path d="M0 9h7V5l8 7-8 7v-4H0z" fill="#d81e1e" stroke="#611"/></svg>
         </div>
         <div class="lbs gr" style="margin-top:-9px"><span data-w="36">squema</span><span data-w="34">buscar</span><span data-w="45">refrescar</span><span data-w="17">info</span><span data-w="40">importar</span><span data-w="41">exportar</span><span data-w="20">salir</span></div>
         <div class="d-flex" style="font-size:10.800px;margin-top:1px;line-height:16px"><span data-w="110">geado como: cn<span class="eq">=</span>admin</span></div>
         <div style="margin-top:6px"></div>
         <div class="tr1 gr"><svg width="13" height="9"><path d="M.5.5h8v8h-8z" fill="#fff" stroke="#888"/><path d="M2 4.500h5" stroke="#000"/><path d="M9 4.500h4" stroke="#999" stroke-dasharray="1 1"/></svg><svg width="15" height="15"><circle cx="7.500" cy="7.500" r="7" fill="#3c5876"/><path d="M3 4l4-2 2 3-3 5-3-2zM9 9l4-1-2 4z" fill="#aebccc"/></svg><span data-w="165">dc<span class="eq">=</span>somebooks<span style="color:red"> , </span>dc<span class="eq">=</span>local (1)</span></div>
         <div class="tr2 gr"><svg width="8" height="21"><path d="M.5 0v19M1 11.500h7" stroke="#999" fill="none" stroke-dasharray="1 1"/></svg><svg width="16" height="20"><path d="M2 20v-5q1-3 6-3t6 3v5z" fill="#b5c0d5" stroke="#889"/><circle cx="8" cy="7" r="5" fill="#f0b8a0"/><path d="M2 6q0-5 6-5t6 5l-2 1H4z" fill="#26397c"/><path d="M8 13l-1 4 1 2 1-2z" fill="#c22"/></svg><span data-w="57">cn<span class="eq">=</span>admin</span></div>
         <div class="tr2 gr"><svg width="8" height="21"><path d="M.5 0v11.500h7" stroke="#999" fill="none" stroke-dasharray="1 1"/></svg><svg width="16" height="15"><path d="M8 0l2.200 5 5.600.500-4 3.700L13 15l-5-3-5 3 1.200-5.800-4-3.700L5.800 5z" fill="#f9b316"/></svg><span data-w="109" style="margin-left:-1px">Crear nuevo objeto</span></div>
        </div>
        <div class="rt">
         <div class="h1b"><span data-w="177">Crear entrada LDAP</span></div>
         <div class="h2b"><span data-w="176">Servidor: <b>My LDAP Server</b> &nbsp; Contenedor:</span><br><b data-w="111">dc=somebooks,dc=local</b></div>
         <div class="text-center" style="font-size:12.600px;height:45px;line-height:45px"><span data-w="161">¿Desea crear esta entrada?</span></div>
         <table class="tbl"><colgroup><col style="width:125px"><col style="width:101px"><col style="width:54px"></colgroup>
          <tr><th>Atributo</th><th>Nuevo valor</th><th>Omitir</th></tr>
          <tr class="e id"><td colspan="3"><b data-w="217">userid=musa,dc=somebooks,dc=local</b></td></tr>
          <tr class="o"><td><b>cn</b></td><td>musa</td><td><i class="ck"></i></td></tr>
          <tr class="e"><td><b>gidNumber</b></td><td>10000</td><td><i class="ck"></i></td></tr>
          <tr class="o"><td><b>homeDirectory</b></td><td>/home/musa</td><td><i class="ck"></i></td></tr>
          <tr class="e"><td><b>loginShell</b></td><td>/bin/bash</td><td><i class="ck w"></i></td></tr>
          <tr class="o tall"><td><b>objectClass</b></td><td>account<br><span data-w="73">posixAccount</span></td><td><i class="ck"></i></td></tr>
          <tr class="e"><td><b data-w="104">organizationName</b></td><td>somebooks</td><td><i class="ck w"></i></td></tr>
          <tr class="o"><td><b>Password</b></td><td><span data-w="80">****************</span></td><td><i class="ck w"></i></td></tr>
          <tr class="e"><td><b>uidNumber</b></td><td>1002</td><td><i class="ck"></i></td></tr>
          <tr class="o"><td><b>userid</b></td><td>musa</td><td><i class="ck"></i></td></tr>
         </table>
         <div class="d-flex ub justify-content-center" style="gap:3px;margin-top:16px"><div class="fb d-flex align-items-center justify-content-center"><span data-w="58">Cometer</span></div><div class="fb d-flex align-items-center justify-content-center"><span data-w="57">Cancelar</span></div></div>
        </div>
       </div>
       <div class="text-end text-black" style="font:bold 12px/15px 'Liberation Sans';padding-right:4px;margin-top:1px">1.2.2</div>
       <svg class="ms-auto" style="margin-right:4px" width="80" height="3"><path d="M0 1.500h80" stroke="#111" stroke-width="1" stroke-dasharray="5 1.500"/></svg>
      </div>
     </div>
     <div class="vs"><i class="d-flex align-items-center justify-content-center" style="height:16px"><svg width="6" height="4"><path d="M0 4h6L3 0z" fill="#555"/></svg></i><i class="d-flex align-items-center justify-content-center" style="height:403px;margin-top:86px"><svg width="4" height="8"><path d="M0 1h4M0 4h4M0 7h4" stroke="#aaa"/></svg></i><i class="d-flex align-items-center justify-content-center" style="height:13px;margin-top:20px"><svg width="6" height="4"><use href="#dn"/></svg></i></div>
    </div>
    <div class="hs d-flex"><i class="d-flex align-items-center justify-content-center" style="width:14px"><svg width="4" height="6"><path d="M4 0v6L0 3z" fill="#555"/></svg></i><i style="width:57px;background:#dcdad8;border-color:#c5c2be"></i><i class="d-flex align-items-center justify-content-center" style="width:505px;margin-left:-1px"><svg width="8" height="4"><path d="M1 0v4M4 0v4M7 0v4" stroke="#aaa"/></svg></i><i class="d-flex align-items-center justify-content-center" style="width:14px"><svg width="4" height="6"><path d="M0 0v6l4-3z" fill="#999"/></svg></i></div>
   </div>
  </div>
 </div>
 <div class="stt gr">
  <svg width="14" height="15"><rect x=".7" y=".7" width="12.600" height="13.600" rx="2" fill="#d8ecff" stroke="#1464c8" stroke-width="1.400"/><circle cx="7" cy="6" r="3.500" fill="none" stroke="#1464c8" stroke-width="1.500"/><path d="M7 6l-3 6h4" fill="none" stroke="#1464c8" stroke-width="1.500"/></svg>
  <svg width="15" height="15"><circle cx="7.500" cy="7.500" r="6.800" fill="#ddd" stroke="#aaa"/><circle cx="7.500" cy="7.500" r="2" fill="#fff" stroke="#999"/></svg>
  <svg width="16" height="15"><path d="M5 1h10v7H5z" fill="#2d8ae8" stroke="#246"/><path d="M1 6h9v6H1z" fill="#3fa0f5" stroke="#246"/><path d="M3 14h5" stroke="#555" stroke-width="2"/></svg>
  <svg width="15" height="15"><path d="M1 14l2-6 7-7 4 3-8 8z" fill="#5ab0f5" stroke="#1f5fae"/></svg>
  <svg width="16" height="13"><path d="M1 12V1h5l1 2h8v9z" fill="#d5d5d5" stroke="#aaa"/></svg>
  <svg width="16" height="14"><path d="M1 1h14v9H1z" fill="#3093ef" stroke="#124b96" stroke-width="1.500"/><path d="M3 13h10" stroke="#555" stroke-width="2"/></svg>
  <svg width="16" height="14"><path d="M5 1h10v8H5z" fill="#3fa0f5" stroke="#1c2f90"/><path d="M1 5h8v8H1z" fill="#ddd" stroke="#1c2f90" stroke-width="1.500"/><path d="M8 1v4h5V1" fill="#fff"/></svg>
  <svg width="15" height="15"><path d="M2 2h11v11H2z" fill="#5a7fe8" stroke="#1c2f90" stroke-width="2" stroke-dasharray="1.500 1"/><path d="M5 4v4q0 3 2.500 3T10 8V4" fill="none" stroke="#fff" stroke-width="1.500"/></svg>
  <svg width="16" height="16"><circle cx="7.500" cy="7.500" r="6.800" fill="#a8d5f8" stroke="#2a70b5"/><path d="M4 3l3 3-2 3 4 1M8 8h5v5" fill="none" stroke="#2f9a2f" stroke-width="2.400"/></svg>
  <svg width="15" height="15"><rect x=".7" y=".7" width="13.600" height="13.600" rx="1.500" fill="#fff" stroke="#124b96" stroke-width="1.400"/><path d="M6 3h3v4h3l-4.500 5L3 7h3z" fill="#111"/></svg>
  <span data-w="75">CTRL DERECHA</span>
  <svg class="align-self-end" width="9" height="9" style="margin-bottom:3px"><path d="M0 8h9M3 5h6M6 2h3" stroke="#bbb" stroke-width="2" stroke-dasharray="2 1"/></svg>
 </div>
</div>
</div>

<div class="tk gr">
 <svg width="26" height="26"><use href="#win"/></svg>
 <svg width="30" height="30"><path d="M0 0h30v30H0z" fill="#0c8a12"/><path d="M5 10l20-2v16l-20-1z" fill="#fff"/><path d="M10 9q0-5 4-5t4 4" fill="none" stroke="#fff" stroke-width="1.500"/><path d="M9 13l5-.6V16H9zM15 12.400l6-.6V16h-6zM9 17h5v5l-5-.5zM15 17h6v5.500h-6z" fill="#0c8a12"/></svg>
 <svg width="28" height="30"><ellipse cx="14" cy="15" rx="14" ry="15" fill="#b8141c"/><ellipse cx="13.500" cy="15" rx="12" ry="14" fill="#e6313a"/><ellipse cx="14" cy="15" rx="5" ry="11.500" fill="#a5a5a5" stroke="#a01018"/></svg>
 <svg width="28" height="28"><path d="M0 4h20v22H0z" fill="#8fc5e5" stroke="#4a87b0"/><path d="M19 3l7 2v20l-6 2z" fill="#5ba0cf"/><circle cx="11" cy="14" r="9.500" fill="#f07f1a"/><path d="M8 8l9 6-9 6z" fill="#fff"/></svg>
 <svg width="32" height="30"><path d="M3 0h24l-2 26-24-2z" fill="#f9dfd0" stroke="#cf4a1d"/><path d="M9 6h22l-2 23-21-2z" fill="#d8431c" stroke="#f4e0d5"/><path d="M13 12h7M12 17h7M12 21h7" stroke="#fff" stroke-width="2"/><circle cx="24" cy="18" r="4.500" fill="#fff"/><path d="M24 18v-5h5v5z" fill="#d8431c"/></svg>
 <div class="ap d-flex align-items-center justify-content-center"><svg width="30" height="30" viewBox="-15 -15 30 30"><circle r="14.800" fill="#f3c83a"/><path d="M-13 -7A14.800 14.800 0 0 1 13 -7H0L-6 3z" fill="#d84a3c"/><path d="M-13-7L-6 3 0 7-2 14.700A14.800 14.800 0 0 1-13-7" fill="#2f9a51"/><circle r="7" fill="#fff"/><circle r="5.500" fill="#4685ec"/></svg></div>
 <div class="ap d-flex align-items-center justify-content-center"><svg width="32" height="31"><path d="M4 1h22v22L1 27z" fill="#3c66ad" stroke="#dde5f2"/><path d="M9 5l21-3-2 27-18-3z" fill="#f2f5fa" stroke="#8fa0bd"/><path d="M19 17h8M17 21h10M15 24h12" stroke="#6d8dc5" stroke-width="1.500"/><text x="11" y="16" font-size="14" font-weight="bold" fill="#244a97">W</text></svg></div>
 <div class="ap d-flex align-items-center justify-content-center" style="border-right:3px double #888"><svg width="26" height="32"><ellipse cx="14" cy="27" rx="7" ry="4" fill="#6f7f9e"/><path d="M13 0l13 6v15L13 30 0 21V6z" fill="#16284a"/><path d="M1 6l12-5 12 5-12 6z" fill="#33507f" stroke="#dbe4f0"/><path d="M13 12v17M2 8l11 6M24 8l-11 6" stroke="#c8d5e8" stroke-width="1.500"/></svg></div>
 <div class="ap d-flex align-items-center justify-content-center"><svg width="32" height="30"><rect x=".5" y="1" width="31" height="22" rx="1" fill="#3585c8" stroke="#8fc2ea"/><circle cx="9" cy="9" r="5" fill="#cfe5f8"/><path d="M9 9V4a5 5 0 0 1 0 10z" fill="#f5a52a"/><path d="M18 6h9v4h-9zM18 13h9v4h-9z" fill="none" stroke="#fff" stroke-width="1.500"/><path d="M5 19h3M10 19h3" stroke="#f5b52a" stroke-width="2"/><circle cx="17" cy="24" r="5.500" fill="#ddd" stroke="#999"/></svg></div>
 <div class="ap d-flex align-items-center justify-content-center"><svg width="31" height="26"><path d="M0 0h31v26H0z" fill="#050505"/><path d="M0 0h31v4H0z" fill="#d5d5d5"/><text x="3" y="13" font-family="Liberation Mono" font-size="8.500" fill="#fff" textLength="20">C:\_</text></svg></div>
 <div class="ap d-flex align-items-center justify-content-center"><svg width="32" height="31"><path d="M1 4h13v3h17v22H1z" fill="#e9ca6e" stroke="#b8943a"/><path d="M1 8h30v8H1z" fill="#fae9a8"/><path d="M4 2h8v3H4zM14 5h10v3H14z" fill="#3a3"/><path d="M14 4h5v2h-5z" fill="#d33"/><path d="M4 30V18h24v12h-6v-7H10v7z" fill="#9fd2ea" stroke="#5a9cc0"/></svg></div>
 <svg width="17" height="14"><path d="M.5 14v-3h2v3zM4.500 14V9h2v5zM8 14V6h2v8zM11.500 14V3h2v11zM15 14V0h2v14z" fill="#fff" stroke="#555" stroke-width=".5"/></svg>
 <svg width="17" height="16"><path d="M2 11q-3-5 2-6 2-5 7-3 4 3 2 7z" fill="#f4f4f4" stroke="#555"/><path d="M11 5l6 10H6z" fill="#f5b91e" stroke="#865"/><path d="M11.500 9v3M11.500 13v1.200" stroke="#222"/></svg>
 <svg width="16" height="16"><use href="#win"/></svg>
 <svg width="16" height="16"><path d="M0 0h16v16H0z" fill="#1a1f12"/><path d="M2 8q6-7 12-1-6 6-9 1 3-3 6 0" fill="none" stroke="#76b900" stroke-width="1.600"/><path d="M12 8h3v6h-3z" fill="#eadd2a"/></svg>
 <svg width="17" height="16"><path d="M1 1v14M2 2q3-1 5 1t6 0v7q-3 2-5 0t-6 0z" fill="#fff" stroke="#555"/><circle cx="11" cy="11" r="4.800" fill="#d9252a"/><path d="M9 9l4 4M13 9l-4 4" stroke="#fff" stroke-width="1.400"/></svg>
 <svg width="16" height="12"><path d="M3 1h12l-1 8H1z" fill="#dce9f8" stroke="#34609c"/><path d="M4 3h9l-1 3H3z" fill="#2f66b8"/></svg>
 <svg width="10" height="16"><path d="M1 2.500h2V1h4v1.500h2V15H1z" fill="#777" stroke="#fff" stroke-width="1.200"/><path d="M3 5h4v2H3zM3 9h4v4H3z" fill="#fff"/></svg>
 <svg width="16" height="16"><circle cx="8" cy="8" r="8" fill="#f28c1c"/><circle cx="8" cy="8" r="3.800" fill="none" stroke="#fff" stroke-width="2"/><path d="M12 5v7" stroke="#fff" stroke-width="2"/></svg>
 <svg width="15" height="14"><path d="M0 4.500h3L7.500 0v14L3 9.500H0z" fill="#fff" stroke="#555" stroke-width=".8"/><path d="M9.500 4q2 3 0 6M11.500 2q4 5 0 10" fill="none" stroke="#eee"/></svg>
 <svg width="15" height="16"><path d="M.5.5h13v10H.5z" fill="#888" stroke="#222"/><path d="M1 15h4M7 15h5" stroke="#222" stroke-width="2"/></svg>
 <div class="clk"><div><span data-w="27">20:44</span></div><span data-w="58">02/06/2016</span></div>
</div>
<script src="https://cdn.jsdelivr.net/npm/bootstrap@5.3.0/dist/js/bootstrap.bundle.min.js"></script>
<script>
// Tracks each label so that it fills the width given in data-w
document.querySelectorAll('[data-w]').forEach(el=>{
  const r=document.createRange();r.selectNodeContents(el);
  el.style.letterSpacing=((el.dataset.w-r.getBoundingClientRect().width)/el.textContent.length).toFixed(3)+'px';
});
</script>
</body>
</html>
